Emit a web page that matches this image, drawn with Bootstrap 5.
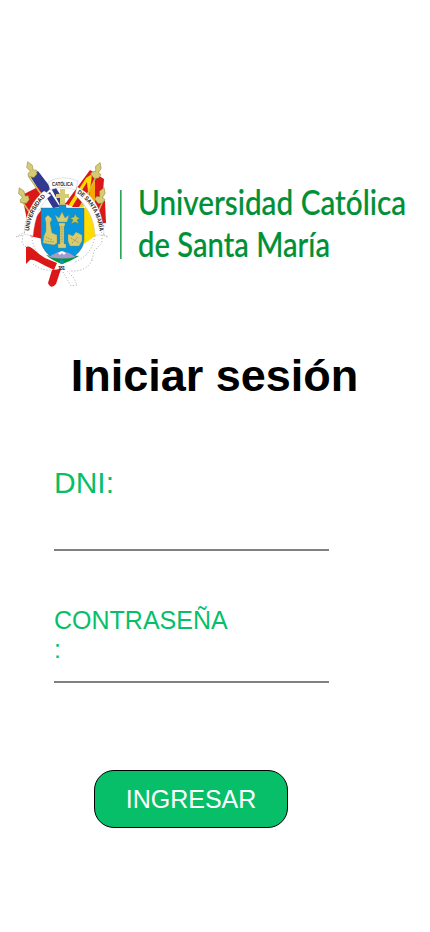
<!DOCTYPE html>
<html lang="es">
<head>
<meta charset="utf-8">
<meta name="viewport" content="width=device-width, initial-scale=1">
<title>Iniciar sesión</title>
<link href="https://cdn.jsdelivr.net/npm/bootstrap@5.3.0/dist/css/bootstrap.min.css" rel="stylesheet">
<style>
body{font-family:"Liberation Sans",Arial,sans-serif;background:#fff;color:#000}
.screen{width:430px;height:932px;padding-top:155px;overflow:hidden}
.brand{width:430px;height:140px;flex:none;overflow:visible}
.brand-name{font-family:Lato,"Open Sans",sans-serif;font-size:35px;font-weight:500;fill:#009036;stroke:#009036;stroke-width:.2}
.heading{font-size:45px;line-height:52px;margin-top:55px;padding-right:1px}
.login{padding-left:54px}
.login label{color:#07bf69;width:178px}
.label-id{font-size:30px;line-height:36px;margin-top:63px}
.label-key{font-size:25px;line-height:28.5px;margin-top:55px}
.line-input{width:275px;border:0;border-bottom:2px solid #808080;border-radius:0;padding:0;background:transparent}
.input-id{height:50px}
.input-key{height:20px}
.btn-enter{width:194px;height:58px;margin:87px 0 0 40px;border:1px solid #000;border-radius:20px;background:#07bf69;color:#fff;font-size:25px;line-height:1;padding:1px 0 0}
.btn-enter:hover{background:#06a95d;color:#fff;border-color:#000}
</style>
</head>
<body>
<main class="screen d-flex flex-column">
<svg class="brand d-block" viewBox="0 155 430 140" role="img" aria-label="Universidad Católica de Santa María">
  <defs>
    <path id="arcL" d="M29 231Q31 211 46 196"/>
    <path id="arcR" d="M77 193Q97 206 100 234"/>
    <g id="finial" fill="#d5cb70" stroke="#8d8442" stroke-width=".5">
      <path d="M0-9L3-4 2 1 5 2 4 6 0 8-5 5-4 2-1 1-3-4Z"/>
    </g>
  </defs>
  <!-- flags -->
  <path d="M31 175L39 171 66 207 48 212Z" fill="#fff"/>
  <path d="M30 176L38 171 51 188 46 193 40 192ZM45 195L50 192 60 207 53 208ZM51 188L56 188 66 204 61 207Z" fill="#30398f"/>
  <path d="M22 195L38 187 45 197 35 207 27 220Z" fill="#dc1717"/>
  <path d="M32 222L43 208 43 239 30 236Z" fill="#dc1717"/>
  <path d="M90 170L104 179 102 205 72 206 65 204Z" fill="#dc1717"/>
  <path d="M86 178L92 174 90 191 84 207 68 206Z" fill="#ffdc00"/>
  <path d="M87 182L88 192 79 207 72 207Z" fill="#dc1717"/>
  <path d="M90 189L95 180 95 207 88 207Z" fill="#f9a700"/>
  <path d="M97 197L105 201 106 223 93 224Z" fill="#dc1717"/>
  <path d="M84 208L92 204 98 222 98 234 84 244Z" fill="#ffdc00"/>
  <path d="M26 247C31 244 36 253 45 258L57 263 54 270C40 264 35 259 30 260L26 264Z" fill="#dc1717"/>
  <path d="M52 270L61 269 56 284Q51 290 48 283Z" fill="#dc1717"/>
  <path d="M29 177L43 197M22 201L30 213M96 177L81 207M103 201L97 214" stroke="#c9bd60" stroke-width="1.5" fill="none"/>
  <use href="#finial" transform="translate(31 170) rotate(-22)"/>
  <use href="#finial" transform="translate(23 196) rotate(-25)"/>
  <use href="#finial" transform="translate(97 171) rotate(20)"/>
  <use href="#finial" transform="translate(101 196) rotate(20)"/>
  <!-- ribbon -->
  <path d="M24 234C25 213 34 199 44 191L51 195C40 204 35 217 33 236ZM48 182Q62 174 78 181L76 190Q62 185 50 190ZM77 187C94 195 103 211 104 235L95 235C94 218 87 206 75 195Z" fill="#fff" stroke="#aaa" stroke-width=".35"/>
  <g fill="none" stroke="#777" stroke-width=".65" stroke-dasharray="1 2">
    <path d="M25 232L16 237 23 235 22 243 29 250M101 232L108 237 102 235 102 243 94 251 92 260"/>
    <path d="M33 264Q41 271 52 270M92 260Q87 272 69 271M63 272L71 286 77 285 74 278 67 271M32 237Q33 254 50 262M95 236Q92 255 75 262"/>
  </g>
  <g font-family="Liberation Sans,Arial,sans-serif" font-weight="700" fill="#222">
    <text font-size="6"><textPath href="#arcL" textLength="39" lengthAdjust="spacingAndGlyphs">UNIVERSIDAD</textPath></text>
    <text font-size="6" x="52" y="185.500" textLength="21" lengthAdjust="spacingAndGlyphs">CATÓLICA</text>
    <text font-size="6"><textPath href="#arcR" textLength="46" lengthAdjust="spacingAndGlyphs">DE SANTA MARÍA</textPath></text>
  </g>
  <!-- cross and shield -->
  <path d="M60 189H65V194H69V198H65V206H60V198H56V194H60Z" fill="#d8cc72"/>
  <path d="M41 208H59V205H66V208H84V240Q84 253 62 264Q41 253 41 240Z" fill="#0796dc" stroke="#555" stroke-width=".4"/>
  <path d="M46 255Q54 257 61 252L70 255 79 256Q71 261 62 264Q53 261 46 255Z" fill="#009641"/>
  <path d="M48 257L58 252 62 251 69 253 76 257Q63 260 48 257Z" fill="#a49acb"/>
  <path d="M58 253L62 251 66 253 64 255 62 253 60 255Z" fill="#fff"/>
  <path d="M61 259L64 262 62 264 60 262Z" fill="#0796dc"/>
  <g fill="#d8cc72" stroke="#92853b" stroke-width=".35">
    <path d="M59 223H65V226H64V244H66V248H58V244H60V226H59Z"/>
    <path d="M55 215L59 218 62 212 65 218 69 215 67 222H58Z"/>
    <path d="M45 218L48 215 52 219 50 223 52 233 57 235 57 243 54 245 43 243 44 236 46 231 46 223Z"/>
    <path d="M68 234L73 236 76 232 82 235 82 241 79 246 70 246 68 241Z"/>
  </g>
  <path d="M75 214L77 217 80 218 77 220 79 224 75 222 71 224 73 220 70 218 74 217Z" fill="#c4c758" stroke="#59743a" stroke-width=".4"/>
  <path d="M46 237L52 240M45 241L54 242M71 238L79 243M72 243L78 237M62 226V242" stroke="#786f39" stroke-width=".6" fill="none" stroke-dasharray="1.500 1"/>
  <text x="58" y="269.500" font-family="Liberation Sans,sans-serif" font-size="5" font-weight="700" textLength="7" fill="#222">181</text>
  <!-- wordmark -->
  <path d="M120.800 190V259" stroke="#2fa35c" stroke-width="1.700"/>
  <text class="brand-name" x="138" y="215" textLength="268" lengthAdjust="spacingAndGlyphs">Universidad Católica</text>
  <text class="brand-name" x="138" y="257" textLength="192" lengthAdjust="spacingAndGlyphs">de Santa María</text>
</svg>
<h1 class="heading fw-bold text-center mb-0">Iniciar sesión</h1>
<form class="login d-flex flex-column align-items-start">
  <label class="label-id" for="dni">DNI:</label>
  <input class="line-input input-id" id="dni" type="text">
  <label class="label-key" for="clave">CONTRASEÑA<br>:</label>
  <input class="line-input input-key" id="clave" type="password">
  <button class="btn btn-enter" type="button">INGRESAR</button>
</form>
</main>
<script src="https://cdn.jsdelivr.net/npm/bootstrap@5.3.0/dist/js/bootstrap.bundle.min.js"></script>
</body>
</html>
